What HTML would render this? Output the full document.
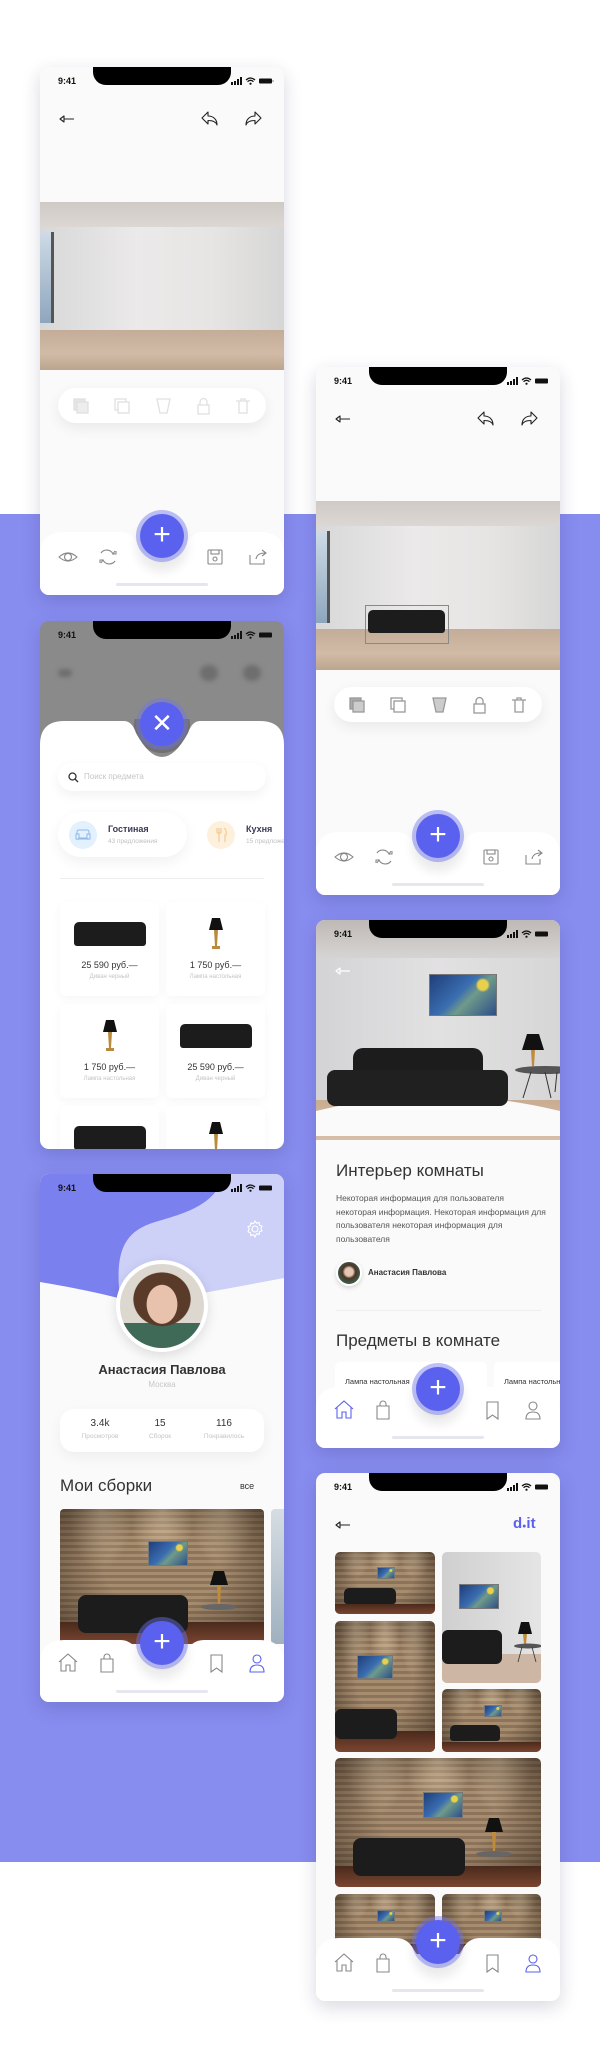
<!DOCTYPE html>
<html><head><meta charset="utf-8"><style>
*{margin:0;padding:0;box-sizing:border-box}
body{width:600px;height:2069px;background:#fff;position:relative;overflow:hidden;font-family:"Liberation Sans",sans-serif}
.band{position:absolute;left:0;top:514px;width:600px;height:1348px;background:#878cef}
.ph{position:absolute;width:244px;height:528px;border-radius:9px;overflow:hidden;background:#fafafa;box-shadow:0 6px 18px rgba(40,40,90,.18)}
.abs{position:absolute}
.notch{position:absolute;left:53px;top:0;width:138px;height:18px;background:#000;border-radius:0 0 13px 13px;z-index:5}
.time{position:absolute;left:18px;top:9px;font-size:9px;font-weight:bold;color:#111;z-index:5}
.sicons{position:absolute;left:191px;top:10px;z-index:5}
.room{position:absolute;left:0;width:244px;overflow:hidden;background:linear-gradient(90deg,#d8d8d8,#ebe9e9 40%,#e7e5e4 70%,#d6d6d6)}
.ceil{position:absolute;left:0;top:0;width:100%;height:15%;background:linear-gradient(#cfcac5,#dcd7d3)}
.floor{position:absolute;left:0;bottom:0;width:100%;height:24%;background:linear-gradient(#c4ad98,#d2bba6 60%,#bca58e)}
.win{position:absolute;left:0;top:18%;width:14px;height:54%;background:linear-gradient(#cfdbe6,#8ea6bd);border-right:3px solid #555}
.tool{position:absolute;left:18px;width:208px;height:35px;background:#fff;border-radius:18px;box-shadow:0 5px 14px rgba(0,0,0,.07)}
.fab{position:absolute;left:100px;top:447px;width:44px;height:44px;border-radius:50%;background:#5a61ef;box-shadow:0 0 0 4px rgba(110,116,240,.45),0 10px 10px 4px rgba(0,0,0,.08);z-index:6;color:#fff;font-size:30px;line-height:42px;text-align:center;font-weight:300}
.bar{position:absolute;left:0;top:465px;z-index:4}
.hi{position:absolute;left:76px;top:516px;width:92px;height:3px;border-radius:2px;background:#e6e6ee;z-index:5}
.nav{position:absolute;top:480px;z-index:5}
.card{position:absolute;width:99px;height:94px;background:#fff;border-radius:6px;box-shadow:0 3px 10px rgba(0,0,0,.04);text-align:center}
.card .p{position:absolute;top:58px;width:100%;font-size:9px;color:#333}
.card .s{position:absolute;top:72px;width:100%;font-size:6px;color:#c4c4c4}
.sofa{position:absolute;background:#1c1c1c;border-radius:5px 5px 3px 3px}
.brick{background:radial-gradient(ellipse 70% 70% at 50% 45%,transparent 40%,rgba(30,20,12,.55)),radial-gradient(ellipse 16% 45% at 20% 0,rgba(255,235,200,.45),transparent),radial-gradient(ellipse 16% 45% at 50% 0,rgba(255,235,200,.45),transparent),radial-gradient(ellipse 16% 45% at 80% 0,rgba(255,235,200,.45),transparent),repeating-linear-gradient(0deg,#8c735a 0 3px,#a78d70 3px 6px),#9a8066;position:absolute;overflow:hidden;border-radius:5px}
.brick:after{content:"";position:absolute;left:0;bottom:0;width:100%;height:16%;background:linear-gradient(#4a2a1c,#7a4530)}
.vg{position:absolute;background:radial-gradient(circle at 80% 25%,#e8d04a 8%,transparent 12%),linear-gradient(135deg,#1f3f7a,#3a6db0 45%,#6f9a8a 60%,#2c4f8a);border:1px solid #777;z-index:1}
.lamp{position:absolute}
.bl{position:absolute;z-index:1}
</style></head><body>
<div class="band"></div>

<!-- PHONE 1 -->
<div class="ph" style="left:40px;top:67px">
 <div class="notch"></div><div class="time">9:41</div>
 <svg class="sicons" width="44" height="8" viewBox="0 0 44 8"><rect x="0" y="5" width="2" height="3" fill="#111"/><rect x="3" y="4" width="2" height="4" fill="#111"/><rect x="6" y="2" width="2" height="6" fill="#111"/><rect x="9" y="0" width="2" height="8" fill="#111"/><path d="M15 3 Q19.5 -1 24 3 M16.5 4.7 Q19.5 2 22.5 4.7" stroke="#111" stroke-width="1.3" fill="none"/><circle cx="19.5" cy="6.7" r="1.1" fill="#111"/><rect x="28" y="1.5" width="13" height="5" rx="1" fill="#111"/><rect x="41.5" y="3" width="1" height="2" fill="#888"/></svg>
 <svg class="abs" style="left:18px;top:46px" width="18" height="12"><path d="M6 6H16M2 6L6 3V9Z" stroke="#222" stroke-width="1.1" fill="none" stroke-linejoin="round"/></svg>
 <svg class="abs" style="left:160px;top:43px" width="20" height="18"><path d="M8 2L2 8L8 14V10.5C13 10.5 16 12 17 15C17 9 13 6 8 6Z" stroke="#222" stroke-width="1.1" fill="none" stroke-linejoin="round"/></svg>
 <svg class="abs" style="left:203px;top:43px" width="20" height="18"><path d="M12 2L18 8L12 14V10.5C7 10.5 4 12 3 15C3 9 7 6 12 6Z" stroke="#222" stroke-width="1.1" fill="none" stroke-linejoin="round"/></svg>
 <div class="room" style="top:135px;height:168px"><div class="ceil"></div><div class="floor"></div><div class="win"></div></div>
 <div class="tool" style="top:321px"><svg width="208" height="35" style="opacity:.25"><g fill="none" stroke="#888" stroke-width="1.3"><rect x="16" y="11" width="11" height="11" fill="#999"/><rect x="19" y="14" width="11" height="11" fill="#bbb"/><rect x="57" y="11" width="11" height="11"/><rect x="60" y="14" width="11" height="11" fill="#fff"/><path d="M99 11h13l-3 14h-7z"/><rect x="140" y="17" width="11" height="9"/><path d="M142 17v-3a3.5 3.5 0 0 1 7 0v3"/><path d="M178 13h14M181 13v12h8v-12M183 13v-2h4v2"/></g></svg></div>
 <svg class="bar" width="244" height="63"><path d="M0 63V24Q0 0 24 0H80Q92 0 98 12Q122 50 146 12Q152 0 164 0H220Q244 0 244 24V63Z" fill="#fff"/></svg>
 <div class="fab">+</div>
 <svg class="nav" style="left:18px" width="210" height="20"><g fill="none" stroke="#888" stroke-width="1.1"><path d="M1 10Q10 2 19 10Q10 18 1 10Z"/><circle cx="10" cy="10" r="3.5"/><path d="M43 6a7 7 0 0 1 12 1l2-3M57 14a7 7 0 0 1-12-1l-2 3M55 7h3V4M45 13h-3v3"/><rect x="150" y="3" width="14" height="14" rx="1"/><rect x="153" y="3" width="8" height="4"/><circle cx="157" cy="12" r="2"/><path d="M192 8v9h14v-5M198 12q1-6 9-6M204 3l4 3-4 3"/></g></svg>
 <div class="hi"></div>
</div>

<!-- PHONE 2 (right top) -->
<div class="ph" style="left:316px;top:367px">
 <div class="notch"></div><div class="time">9:41</div>
 <svg class="sicons" width="44" height="8" viewBox="0 0 44 8"><rect x="0" y="5" width="2" height="3" fill="#111"/><rect x="3" y="4" width="2" height="4" fill="#111"/><rect x="6" y="2" width="2" height="6" fill="#111"/><rect x="9" y="0" width="2" height="8" fill="#111"/><path d="M15 3 Q19.5 -1 24 3 M16.5 4.7 Q19.5 2 22.5 4.7" stroke="#111" stroke-width="1.3" fill="none"/><circle cx="19.5" cy="6.7" r="1.1" fill="#111"/><rect x="28" y="1.5" width="13" height="5" rx="1" fill="#111"/></svg>
 <svg class="abs" style="left:18px;top:46px" width="18" height="12"><path d="M6 6H16M2 6L6 3V9Z" stroke="#222" stroke-width="1.1" fill="none" stroke-linejoin="round"/></svg>
 <svg class="abs" style="left:160px;top:43px" width="20" height="18"><path d="M8 2L2 8L8 14V10.5C13 10.5 16 12 17 15C17 9 13 6 8 6Z" stroke="#222" stroke-width="1.1" fill="none" stroke-linejoin="round"/></svg>
 <svg class="abs" style="left:203px;top:43px" width="20" height="18"><path d="M12 2L18 8L12 14V10.5C7 10.5 4 12 3 15C3 9 7 6 12 6Z" stroke="#222" stroke-width="1.1" fill="none" stroke-linejoin="round"/></svg>
 <div class="room" style="top:134px;height:169px"><div class="ceil"></div><div class="floor"></div><div class="win"></div>
  <div class="sofa" style="left:52px;top:109px;width:77px;height:23px"></div>
  <div class="abs" style="left:49px;top:104px;width:84px;height:39px;border:1px solid #888"></div>
 </div>
 <div class="tool" style="top:320px"><svg width="208" height="35"><g fill="none" stroke="#999" stroke-width="1.3"><rect x="16" y="11" width="11" height="11" fill="#aaa"/><rect x="19" y="14" width="11" height="11" fill="#ccc"/><rect x="57" y="11" width="11" height="11"/><rect x="60" y="14" width="11" height="11" fill="#fff"/><path d="M99 11h13l-3 14h-7z" fill="#ccc"/><rect x="140" y="17" width="11" height="9"/><path d="M142 17v-3a3.5 3.5 0 0 1 7 0v3"/><path d="M178 13h14M181 13v12h8v-12M183 13v-2h4v2"/></g></svg></div>
 <svg class="bar" width="244" height="63"><path d="M0 63V24Q0 0 24 0H80Q92 0 98 12Q122 50 146 12Q152 0 164 0H220Q244 0 244 24V63Z" fill="#fff"/></svg>
 <div class="fab">+</div>
 <svg class="nav" style="left:18px" width="210" height="20"><g fill="none" stroke="#888" stroke-width="1.1"><path d="M1 10Q10 2 19 10Q10 18 1 10Z"/><circle cx="10" cy="10" r="3.5"/><path d="M43 6a7 7 0 0 1 12 1l2-3M57 14a7 7 0 0 1-12-1l-2 3M55 7h3V4M45 13h-3v3"/><rect x="150" y="3" width="14" height="14" rx="1"/><rect x="153" y="3" width="8" height="4"/><circle cx="157" cy="12" r="2"/><path d="M192 8v9h14v-5M198 12q1-6 9-6M204 3l4 3-4 3"/></g></svg>
 <div class="hi"></div>
</div>

<!-- PHONE 3 catalog -->
<div class="ph" style="left:40px;top:621px;background:#8a8a8a">
 <div class="notch"></div><div class="time">9:41</div>
 <svg class="sicons" width="44" height="8" viewBox="0 0 44 8"><rect x="0" y="5" width="2" height="3" fill="#111"/><rect x="3" y="4" width="2" height="4" fill="#111"/><rect x="6" y="2" width="2" height="6" fill="#111"/><rect x="9" y="0" width="2" height="8" fill="#111"/><path d="M15 3 Q19.5 -1 24 3 M16.5 4.7 Q19.5 2 22.5 4.7" stroke="#111" stroke-width="1.3" fill="none"/><circle cx="19.5" cy="6.7" r="1.1" fill="#111"/><rect x="28" y="1.5" width="13" height="5" rx="1" fill="#111"/></svg>
 <div class="abs" style="left:18px;top:48px;width:14px;height:8px;border-radius:4px;background:#6e6e6e;filter:blur(2px)"></div>
 <div class="abs" style="left:160px;top:44px;width:18px;height:16px;border-radius:8px;background:#6e6e6e;filter:blur(2.5px)"></div>
 <div class="abs" style="left:203px;top:44px;width:18px;height:16px;border-radius:8px;background:#6e6e6e;filter:blur(2.5px)"></div>
 <svg class="abs" style="left:0;top:98px" width="244" height="430"><circle cx="122" cy="6" r="28" fill="#707070"/><path d="M0 430V26Q0 2 24 2H84Q92 2 96 14Q122 62 148 14Q152 2 160 2H220Q244 2 244 26V430Z" fill="#fff"/></svg>
 <div class="fab" style="top:81px;box-shadow:0 0 0 4px rgba(110,116,240,.4)"><span style="font-size:26px;line-height:42px">✕</span></div>
 <div class="abs" style="left:18px;top:142px;width:208px;height:28px;background:#fff;border-radius:14px;box-shadow:0 4px 12px rgba(0,0,0,.06)">
  <svg class="abs" style="left:10px;top:9px" width="11" height="11"><circle cx="4.5" cy="4.5" r="3.5" stroke="#333" stroke-width="1.3" fill="none"/><path d="M7 7l3 3" stroke="#333" stroke-width="1.3"/></svg>
  <div class="abs" style="left:26px;top:9px;font-size:8px;color:#c6c6c6">Поиск предмета</div></div>
 <div class="abs" style="left:18px;top:191px;width:129px;height:45px;background:#fff;border-radius:23px;box-shadow:0 5px 14px rgba(0,0,0,.06)">
  <div class="abs" style="left:11px;top:9px;width:28px;height:28px;border-radius:50%;background:#e3f0fd"></div>
  <svg class="abs" style="left:17px;top:17px" width="16" height="12"><path d="M2 5V3Q2 1 4 1H12Q14 1 14 3V5M1 5h3v4h8V5h3v5H1zM3 10v1M13 10v1" stroke="#8fb7ea" stroke-width="1" fill="none"/></svg>
  <div class="abs" style="left:50px;top:12px;font-size:9px;color:#3a3a55;font-weight:bold">Гостиная</div>
  <div class="abs" style="left:50px;top:26px;font-size:6.5px;color:#c0c0c0">43 предложения</div></div>
 <div class="abs" style="left:167px;top:200px;width:28px;height:28px;border-radius:50%;background:#fdf0dd"></div>
 <svg class="abs" style="left:174px;top:206px" width="14" height="16"><path d="M3 1v5M5 1v5M7 1v5M3 6h4M5 6v9M10 1q3 2 2 7h-1v7" stroke="#f2c585" stroke-width="1" fill="none"/></svg>
 <div class="abs" style="left:206px;top:203px;font-size:9px;color:#3a3a55;font-weight:bold">Кухня</div>
 <div class="abs" style="left:206px;top:217px;font-size:6.5px;color:#c0c0c0;white-space:nowrap">15 предложений</div>
 <div class="abs" style="left:20px;top:257px;width:204px;height:1px;background:#eee"></div>
 <div class="card" style="left:20px;top:281px"><div class="sofa" style="left:14px;top:20px;width:72px;height:24px"></div><div class="p">25 590 руб.—</div><div class="s">Диван черный</div></div>
 <div class="card" style="left:126px;top:281px"><svg class="lamp" style="left:42px;top:14px" width="16" height="36"><path d="M4 2h8l3 12H1z" fill="#111"/><path d="M6 14h4l-1 16h-2z M4 30h8v3H4z" fill="#b88a3a"/></svg><div class="p">1 750 руб.—</div><div class="s">Лампа настольная</div></div>
 <div class="card" style="left:20px;top:383px"><svg class="lamp" style="left:42px;top:14px" width="16" height="36"><path d="M4 2h8l3 12H1z" fill="#111"/><path d="M6 14h4l-1 16h-2z M4 30h8v3H4z" fill="#b88a3a"/></svg><div class="p">1 750 руб.—</div><div class="s">Лампа настольная</div></div>
 <div class="card" style="left:126px;top:383px"><div class="sofa" style="left:14px;top:20px;width:72px;height:24px"></div><div class="p">25 590 руб.—</div><div class="s">Диван черный</div></div>
 <div class="card" style="left:20px;top:485px"><div class="sofa" style="left:14px;top:20px;width:72px;height:24px"></div></div>
 <div class="card" style="left:126px;top:485px"><svg class="lamp" style="left:42px;top:14px" width="16" height="36"><path d="M4 2h8l3 12H1z" fill="#111"/><path d="M6 14h4l-1 16h-2z" fill="#b88a3a"/></svg></div>
</div>

<!-- PHONE 4 interior -->
<div class="ph" style="left:316px;top:920px">
 <div class="abs" style="left:0;top:0;width:244px;height:214px;background:linear-gradient(90deg,#d3d3d5,#e2e1e2 50%,#d7d6d7)"></div>
 <div class="abs" style="left:0;top:0;width:244px;height:38px;background:linear-gradient(#bfb9b5,#d6d4d3)"></div>
 <div class="abs" style="left:0;top:180px;width:244px;height:40px;background:linear-gradient(#c9ad92,#d7bea7)"></div>
 <svg class="abs" style="left:0;top:176px" width="244" height="40"><path d="M0 15Q122 -15 244 15V40H0Z" fill="#fafafa"/></svg>
 <div class="notch"></div><div class="time">9:41</div>
 <svg class="sicons" width="44" height="8" viewBox="0 0 44 8"><rect x="0" y="5" width="2" height="3" fill="#111"/><rect x="3" y="4" width="2" height="4" fill="#111"/><rect x="6" y="2" width="2" height="6" fill="#111"/><rect x="9" y="0" width="2" height="8" fill="#111"/><path d="M15 3 Q19.5 -1 24 3 M16.5 4.7 Q19.5 2 22.5 4.7" stroke="#111" stroke-width="1.3" fill="none"/><circle cx="19.5" cy="6.7" r="1.1" fill="#111"/><rect x="28" y="1.5" width="13" height="5" rx="1" fill="#111"/></svg>
 <svg class="abs" style="left:18px;top:45px" width="18" height="12"><path d="M6 6H16M2 6L6 3V9Z" stroke="#fff" stroke-width="1.2" fill="none" stroke-linejoin="round"/></svg>
 <div class="vg" style="left:113px;top:54px;width:68px;height:42px"></div>
 <div class="abs" style="left:11px;top:128px;width:181px;height:63px">
  <div class="sofa" style="left:26px;top:0;width:130px;height:30px;border-radius:10px 10px 2px 2px"></div>
  <div class="sofa" style="left:0;top:22px;width:181px;height:36px;border-radius:8px;background:#202020"></div>
 </div>
 <svg class="abs" style="left:195px;top:112px" width="49" height="70"><path d="M16 2h12l5 16H11z" fill="#111"/><path d="M20 18h4l-1 16h-2z" fill="#c08c3a"/><ellipse cx="34" cy="38" rx="30" ry="4" fill="#555"/><path d="M20 40l-8 26M34 40l6 26M46 40l-2 20" stroke="#333" stroke-width="1" fill="none"/></svg>
 <div class="abs" style="left:20px;top:241px;font-size:17px;color:#333">Интерьер комнаты</div>
 <div class="abs" style="left:20px;top:272px;width:210px;font-size:8.5px;line-height:13.6px;color:#555">Некоторая информация для пользователя некоторая информация. Некоторая информация для пользователя некоторая информация для пользователя</div>
 <div class="abs" style="left:20px;top:340px;width:26px;height:26px;border-radius:50%;background:radial-gradient(circle at 50% 45%,#e5c6b3 25%,#4a3426 40%,#3d6150 75%);border:2px solid #fff;box-shadow:0 2px 5px rgba(0,0,0,.15)"></div>
 <div class="abs" style="left:52px;top:348px;font-size:8px;font-weight:bold;color:#333">Анастасия Павлова</div>
 <div class="abs" style="left:20px;top:390px;width:205px;height:1px;background:#eee"></div>
 <div class="abs" style="left:20px;top:411px;font-size:17px;color:#333">Предметы в комнате</div>
 <div class="abs" style="left:19px;top:442px;width:152px;height:40px;background:#fff;border-radius:5px"><div class="abs" style="left:10px;top:15px;font-size:7.5px;color:#333;white-space:nowrap">Лампа настольная</div></div>
 <div class="abs" style="left:178px;top:442px;width:80px;height:40px;background:#fff;border-radius:5px"><div class="abs" style="left:10px;top:15px;font-size:7.5px;color:#333;white-space:nowrap">Лампа настольная</div></div>
 <svg class="bar" style="top:467px" width="244" height="63"><path d="M0 63V24Q0 0 24 0H80Q92 0 98 12Q122 50 146 12Q152 0 164 0H220Q244 0 244 24V63Z" fill="#fff"/></svg>
 <div class="fab">+</div>
 <svg class="nav" style="left:18px" width="210" height="20"><g fill="none" stroke="#888" stroke-width="1.1"><path d="M1 9L10 1L19 9M3 7v11h5v-6h4v6h5V7" stroke="#5a61ef"/><path d="M43 6h12v13H43zM46 6V4a3 3 0 0 1 6 0v2"/><path d="M153 2h11v17l-5.5-4-5.5 4z"/><circle cx="199" cy="6" r="4"/><path d="M192 19q0-7 7-7t7 7z"/></g></svg>
 <div class="hi"></div>
</div>

<!-- PHONE 5 profile -->
<div class="ph" style="left:40px;top:1174px">
 <div class="abs" style="left:0;top:0;width:244px;height:140px;background:#cdd0f7"></div>
 <svg class="abs" style="left:0;top:0" width="244" height="140"><path d="M32 0H185C175 30 150 38 115 48C82 58 75 80 80 125L0 110V0Z" fill="#7b80ef"/><path d="M0 108Q60 118 100 130Q170 118 244 104V140H0Z" fill="#fafafa"/></svg>
 <div class="notch"></div><div class="time">9:41</div>
 <svg class="sicons" width="44" height="8" viewBox="0 0 44 8"><rect x="0" y="5" width="2" height="3" fill="#111"/><rect x="3" y="4" width="2" height="4" fill="#111"/><rect x="6" y="2" width="2" height="6" fill="#111"/><rect x="9" y="0" width="2" height="8" fill="#111"/><path d="M15 3 Q19.5 -1 24 3 M16.5 4.7 Q19.5 2 22.5 4.7" stroke="#111" stroke-width="1.3" fill="none"/><circle cx="19.5" cy="6.7" r="1.1" fill="#111"/><rect x="28" y="1.5" width="13" height="5" rx="1" fill="#111"/></svg>
 <svg class="abs" style="left:206px;top:46px" width="18" height="18"><circle cx="9" cy="9" r="3" stroke="#fff" stroke-width="1.1" fill="none"/><path d="M9 1l1.5 2.2 2.6-.7.4 2.7 2.5 1-1.2 2.3 1.2 2.3-2.5 1-.4 2.7-2.6-.7L9 17l-1.5-2.2-2.6.7-.4-2.7-2.5-1L3.2 9 2 6.7l2.5-1 .4-2.7 2.6.7z" stroke="#fff" stroke-width="1.1" fill="none"/></svg>
 <div class="abs" style="left:76px;top:86px;width:92px;height:92px;border-radius:50%;background:#fff;box-shadow:0 4px 12px rgba(0,0,0,.12)"></div>
 <div class="abs" style="left:80px;top:90px;width:84px;height:84px;border-radius:50%;background:radial-gradient(ellipse 30% 38% at 50% 48%,#e8c2ad 60%,transparent 62%),radial-gradient(ellipse 48% 45% at 50% 42%,#5a3b2a 70%,transparent 72%),linear-gradient(#dcd8d0 0 70%,#3f6a58 70%)"></div>
 <div class="abs" style="left:0;top:188px;width:244px;text-align:center;font-size:13px;font-weight:bold;color:#333">Анастасия Павлова</div>
 <div class="abs" style="left:0;top:206px;width:244px;text-align:center;font-size:8px;color:#c8c8c8">Москва</div>
 <div class="abs" style="left:20px;top:235px;width:204px;height:43px;background:#fff;border-radius:14px;box-shadow:0 5px 14px rgba(0,0,0,.05)">
  <div class="abs" style="left:0;top:9px;width:80px;text-align:center;font-size:10px;color:#333">3.4k</div>
  <div class="abs" style="left:0;top:24px;width:80px;text-align:center;font-size:6.5px;color:#c4c4c4">Просмотров</div>
  <div class="abs" style="left:70px;top:9px;width:60px;text-align:center;font-size:10px;color:#333">15</div>
  <div class="abs" style="left:70px;top:24px;width:60px;text-align:center;font-size:6.5px;color:#c4c4c4">Сборок</div>
  <div class="abs" style="left:124px;top:9px;width:80px;text-align:center;font-size:10px;color:#333">116</div>
  <div class="abs" style="left:124px;top:24px;width:80px;text-align:center;font-size:6.5px;color:#c4c4c4">Понравилось</div></div>
 <div class="abs" style="left:20px;top:302px;font-size:17px;color:#333">Мои сборки</div>
 <div class="abs" style="left:200px;top:307px;font-size:9px;color:#333">все</div>
 <div class="brick" style="left:20px;top:335px;width:204px;height:135px;border-radius:4px">
  <div class="vg" style="left:88px;top:32px;width:40px;height:25px"></div>
  <div class="sofa bl" style="left:18px;top:86px;width:110px;height:38px;border-radius:8px"></div>
  <svg class="bl" style="left:140px;top:60px" width="40" height="60"><path d="M14 2h10l4 14H10z" fill="#111"/><path d="M17 16h4l-1 20h-2z" fill="#c08c3a"/><ellipse cx="19" cy="38" rx="18" ry="3" fill="#666"/></svg></div>
 <div class="abs" style="left:231px;top:335px;width:20px;height:135px;background:linear-gradient(#d6dde3,#9fb0be);border-radius:4px"></div>
 <svg class="bar" style="top:466px" width="244" height="63"><path d="M0 63V24Q0 0 24 0H80Q92 0 98 12Q122 50 146 12Q152 0 164 0H220Q244 0 244 24V63Z" fill="#fff"/></svg>
 <div class="fab" style="top:447px">+</div>
 <svg class="nav" style="left:18px;top:479px" width="210" height="20"><g fill="none" stroke="#888" stroke-width="1.1"><path d="M1 9L10 1L19 9M3 7v11h5v-6h4v6h5V7"/><path d="M43 6h12v13H43zM46 6V4a3 3 0 0 1 6 0v2"/><path d="M153 2h11v17l-5.5-4-5.5 4z"/><g stroke="#5a61ef"><circle cx="199" cy="6" r="4"/><path d="M192 19q0-7 7-7t7 7z"/></g></g></svg>
 <div class="hi"></div>
</div>

<!-- PHONE 6 gallery -->
<div class="ph" style="left:316px;top:1473px">
 <div class="notch"></div><div class="time">9:41</div>
 <svg class="sicons" width="44" height="8" viewBox="0 0 44 8"><rect x="0" y="5" width="2" height="3" fill="#111"/><rect x="3" y="4" width="2" height="4" fill="#111"/><rect x="6" y="2" width="2" height="6" fill="#111"/><rect x="9" y="0" width="2" height="8" fill="#111"/><path d="M15 3 Q19.5 -1 24 3 M16.5 4.7 Q19.5 2 22.5 4.7" stroke="#111" stroke-width="1.3" fill="none"/><circle cx="19.5" cy="6.7" r="1.1" fill="#111"/><rect x="28" y="1.5" width="13" height="5" rx="1" fill="#111"/></svg>
 <svg class="abs" style="left:18px;top:46px" width="18" height="12"><path d="M6 6H16M2 6L6 3V9Z" stroke="#222" stroke-width="1.1" fill="none" stroke-linejoin="round"/></svg>
 <div class="abs" style="left:197px;top:42px;font-size:15px;font-weight:bold;color:#5a61ef">d<span style="font-size:7px">●</span>it</div>
 <div class="brick" style="left:19px;top:79px;width:100px;height:62px"><div class="vg" style="left:42px;top:15px;width:18px;height:12px"></div><div class="sofa bl" style="left:9px;top:36px;width:52px;height:16px"></div></div>
 <div class="abs" style="left:126px;top:79px;width:99px;height:131px;border-radius:5px;overflow:hidden;background:linear-gradient(90deg,#d0cfd0,#e6e5e5)"><div class="abs" style="left:0;bottom:0;width:100%;height:22%;background:#cdb7a4"></div><div class="vg" style="left:17px;top:32px;width:40px;height:25px"></div><div class="sofa" style="left:0;top:78px;width:60px;height:34px;border-radius:6px"></div><svg class="abs" style="left:70px;top:68px" width="29" height="45"><path d="M9 2h8l3 12H6z" fill="#111"/><path d="M11 14h4l-1 10h-2z" fill="#c08c3a"/><ellipse cx="16" cy="26" rx="14" ry="2.5" fill="#555"/><path d="M10 27l-4 15M20 27l4 15" stroke="#333" stroke-width=".8"/></svg></div>
 <div class="brick" style="left:19px;top:148px;width:100px;height:131px"><div class="vg" style="left:22px;top:34px;width:36px;height:24px"></div><div class="sofa bl" style="left:0;top:88px;width:62px;height:30px;border-radius:6px"></div></div>
 <div class="brick" style="left:126px;top:216px;width:99px;height:63px"><div class="vg" style="left:42px;top:16px;width:18px;height:12px"></div><div class="sofa bl" style="left:8px;top:36px;width:50px;height:16px"></div></div>
 <div class="brick" style="left:19px;top:285px;width:206px;height:129px"><div class="vg" style="left:88px;top:34px;width:40px;height:26px"></div><div class="sofa bl" style="left:18px;top:80px;width:112px;height:38px;border-radius:8px"></div><svg class="bl" style="left:140px;top:58px" width="40" height="60"><path d="M14 2h10l4 14H10z" fill="#111"/><path d="M17 16h4l-1 20h-2z" fill="#c08c3a"/><ellipse cx="19" cy="38" rx="18" ry="3" fill="#666"/></svg></div>
 <div class="brick" style="left:19px;top:421px;width:100px;height:60px"><div class="vg" style="left:42px;top:16px;width:18px;height:12px"></div></div>
 <div class="brick" style="left:126px;top:421px;width:99px;height:60px"><div class="vg" style="left:42px;top:16px;width:18px;height:12px"></div></div>
 <svg class="bar" width="244" height="63"><path d="M0 63V24Q0 0 24 0H80Q92 0 98 12Q122 50 146 12Q152 0 164 0H220Q244 0 244 24V63Z" fill="#fff"/></svg>
 <div class="fab">+</div>
 <svg class="nav" style="left:18px" width="210" height="20"><g fill="none" stroke="#888" stroke-width="1.1"><path d="M1 9L10 1L19 9M3 7v11h5v-6h4v6h5V7"/><path d="M43 6h12v13H43zM46 6V4a3 3 0 0 1 6 0v2"/><path d="M153 2h11v17l-5.5-4-5.5 4z"/><g stroke="#5a61ef"><circle cx="199" cy="6" r="4"/><path d="M192 19q0-7 7-7t7 7z"/></g></g></svg>
 <div class="hi"></div>
</div>
</body></html>
